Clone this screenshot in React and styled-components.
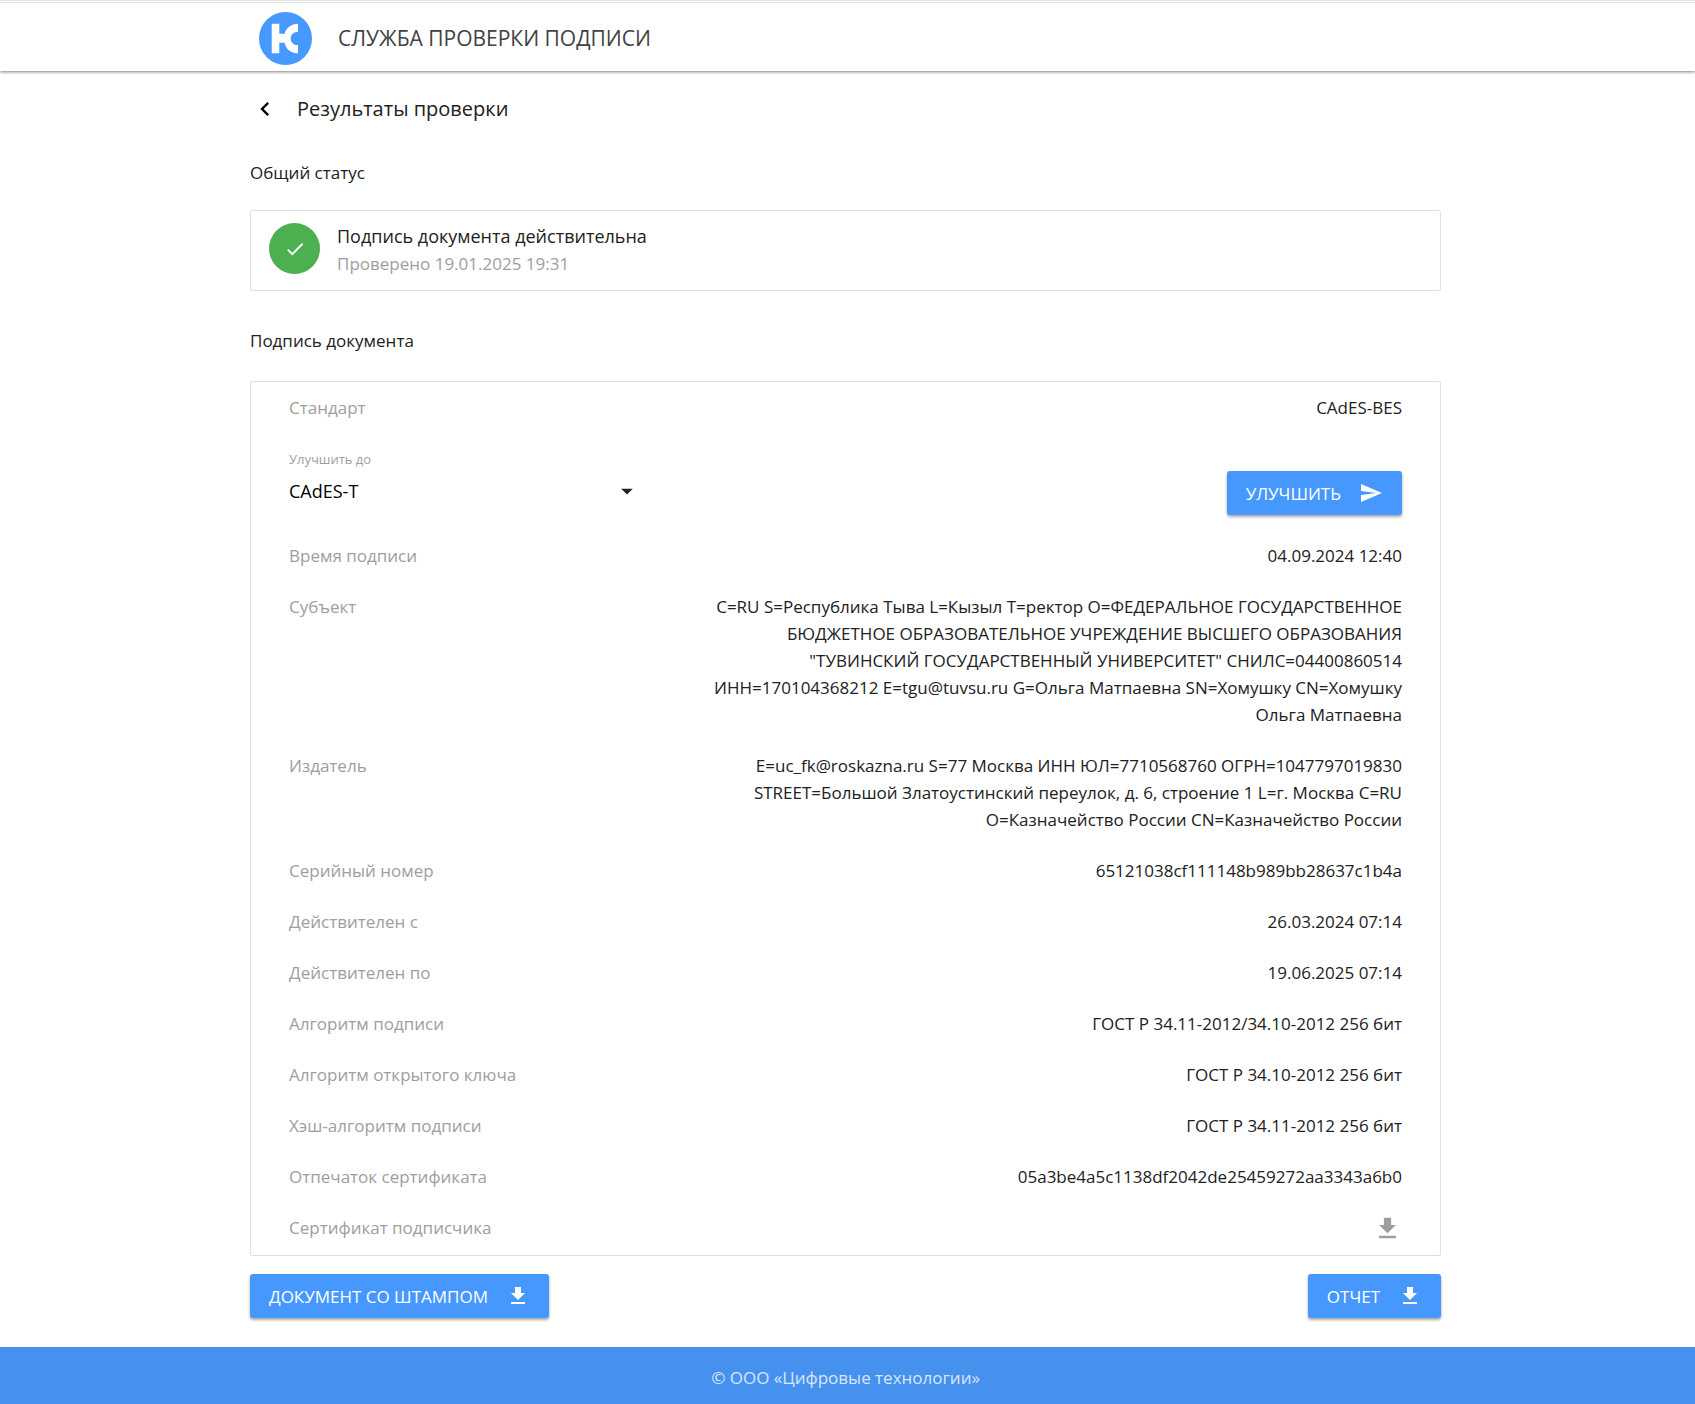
import React from 'react'
import styled, { createGlobalStyle } from 'styled-components'

const GlobalStyle = createGlobalStyle`
  * {
    box-sizing: border-box;
  }
  body {
    margin: 0;
    background: #fff;
    color: #212121;
    font-family: 'Open Sans', 'Noto Sans', sans-serif;
    font-size: 17px;
    line-height: 27px;
  }
`

const Container = styled.div`
  max-width: 1195px;
  margin: 0 auto;
  padding-right: 4px;
`

const Header = styled.header`
  height: 71px;
  padding-top: 5px;
  border-top: 3px double #dee1e6;
  box-shadow: 0 1px 3px rgba(0, 0, 0, 0.5);
`

const Brand = styled.a`
  display: flex;
  align-items: center;
  gap: 26px;
  height: 60px;
  padding-left: 9px;
  color: #424242;
  font-size: 21px;
  text-decoration: none;
`

const PageTitle = styled.div`
  display: flex;
  align-items: center;
  height: 73px;
  padding-top: 2px;
`

const BackButton = styled.button`
  display: flex;
  justify-content: center;
  width: 30px;
  margin-right: 17px;
  padding: 0;
  border: 0;
  background: none;
  color: #000;
  cursor: pointer;
`

const Heading = styled.h1`
  margin: 0;
  font-size: 20px;
  font-weight: 400;
`

const SectionTitle = styled.h2`
  margin: 0;
  padding: ${props => props.$first ? '15px 0 24px' : '36px 0 27px'};
  font-size: 17px;
  font-weight: 400;
`

const Card = styled.section`
  border: 1px solid #e0e0e0;
  border-radius: 2px;
`

const Status = styled(Card)`
  display: flex;
  align-items: flex-start;
  gap: 17px;
  padding: 12px 18px 13px;
`

const StatusIcon = styled.span`
  display: flex;
  align-items: center;
  justify-content: center;
  width: 51px;
  height: 51px;
  border-radius: 50%;
  background: #4caf50;
  color: #fff;
`

const StatusText = styled.p`
  margin: 0;
  font-size: 18px;
`

const StatusDate = styled.p`
  margin: 0;
  color: #9e9e9e;
`

const Row = styled.div`
  display: flex;
  align-items: flex-start;
  justify-content: space-between;
  padding: 12px 38px;
`

const Label = styled.span`
  color: #9e9e9e;
`

const Value = styled.span`
  max-width: 64%;
  text-align: right;
`

const IconButton = styled.button`
  display: flex;
  padding: 0;
  border: 0;
  background: none;
  color: #9e9e9e;
  cursor: pointer;
`

const UpgradeRow = styled.div`
  display: flex;
  align-items: flex-end;
  justify-content: space-between;
  padding: 13px 38px 15px;
`

const Field = styled.div`
  display: flex;
  flex-direction: column;
  width: 352px;
  padding-bottom: 6px;
`

const FieldLabel = styled.label`
  color: #9e9e9e;
  font-size: 13px;
`

const SelectBox = styled.div`
  display: flex;
  align-items: center;

  svg {
    margin-left: -28px;
    pointer-events: none;
  }
`

const Select = styled.select`
  flex: 1;
  height: 36px;
  padding: 0;
  border: 0;
  appearance: none;
  background: none;
  color: #000;
  font-family: inherit;
  font-size: 18px;
`

const Button = styled.button`
  display: flex;
  align-items: center;
  gap: 18px;
  height: 44px;
  padding: 0 19px;
  border: 0;
  border-radius: 3px;
  background: #4698ff;
  box-shadow: 0 2px 3px rgba(0, 0, 0, 0.35);
  color: #fff;
  font-family: inherit;
  font-size: 17px;
  text-transform: uppercase;
  cursor: pointer;
`

const Actions = styled.div`
  display: flex;
  justify-content: space-between;
  padding: 18px 0 29px;
`

const Footer = styled.footer`
  padding: 17px 0 13px;
  background: #4691ee;
  color: rgba(255, 255, 255, 0.8);
  text-align: center;
`

const Icon = ({ size = 24, d }) => (
  <svg width={size} height={size} viewBox="0 0 24 24" fill="currentColor" aria-hidden="true">
    <path d={d} />
  </svg>
)

const icons = {
  back: 'M15.41 7.41L14 6l-6 6 6 6 1.41-1.41L10.83 12z',
  check: 'M9 16.17L4.83 12l-1.42 1.41L9 19 21 7l-1.41-1.41z',
  arrow: 'M7 10l5 5 5-5z',
  send: 'M2.01 21L23 12 2.01 3 2 10l15 2-15 2z',
  download: 'M19 9h-4V3H9v6H5l7 7 7-7zM5 18v2h14v-2H5z',
}

const Logo = () => (
  <svg width="53" height="53" viewBox="0 0 53 53" aria-hidden="true">
    <circle cx="26.5" cy="26.5" r="26.5" fill="#4599ff" />
    <path
      d="M12.700 11.700h7.600v10h5.200C27.500 15.500 32.500 11.700 39 11.700v8c-4.500 0-7.300 3-7.300 6.700s2.800 6.700 7.300 6.700v8.200c-7 0-12-4-13.500-10.600h-5.200v10.600h-7.600z"
      fill="#fff"
    />
  </svg>
)

const details = [
  ['Время подписи', '04.09.2024 12:40'],
  ['Субъект', 'C=RU S=Республика Тыва L=Кызыл T=ректор O=ФЕДЕРАЛЬНОЕ ГОСУДАРСТВЕННОЕ БЮДЖЕТНОЕ ОБРАЗОВАТЕЛЬНОЕ УЧРЕЖДЕНИЕ ВЫСШЕГО ОБРАЗОВАНИЯ "ТУВИНСКИЙ ГОСУДАРСТВЕННЫЙ УНИВЕРСИТЕТ" СНИЛС=04400860514 ИНН=170104368212 E=tgu@tuvsu.ru G=Ольга Матпаевна SN=Хомушку CN=Хомушку Ольга Матпаевна'],
  ['Издатель', 'E=uc_fk@roskazna.ru S=77 Москва ИНН ЮЛ=7710568760 ОГРН=1047797019830 STREET=Большой Златоустинский переулок, д. 6, строение 1 L=г. Москва C=RU O=Казначейство России CN=Казначейство России'],
  ['Серийный номер', '65121038cf111148b989bb28637c1b4a'],
  ['Действителен с', '26.03.2024 07:14'],
  ['Действителен по', '19.06.2025 07:14'],
  ['Алгоритм подписи', 'ГОСТ Р 34.11-2012/34.10-2012 256 бит'],
  ['Алгоритм открытого ключа', 'ГОСТ Р 34.10-2012 256 бит'],
  ['Хэш-алгоритм подписи', 'ГОСТ Р 34.11-2012 256 бит'],
  ['Отпечаток сертификата', '05a3be4a5c1138df2042de25459272aa3343a6b0'],
]

function App () {
  return (
    <>
      <GlobalStyle />
      <Header>
        <Container>
          <Brand href="#">
            <Logo />
            СЛУЖБА ПРОВЕРКИ ПОДПИСИ
          </Brand>
        </Container>
      </Header>

      <Container as="main">
        <PageTitle>
          <BackButton type="button" aria-label="Назад"><Icon size={28} d={icons.back} /></BackButton>
          <Heading>Результаты проверки</Heading>
        </PageTitle>

        <SectionTitle $first>Общий статус</SectionTitle>
        <Status>
          <StatusIcon><Icon size={22} d={icons.check} /></StatusIcon>
          <div>
            <StatusText>Подпись документа действительна</StatusText>
            <StatusDate>Проверено 19.01.2025 19:31</StatusDate>
          </div>
        </Status>

        <SectionTitle>Подпись документа</SectionTitle>
        <Card>
          <Row>
            <Label>Стандарт</Label>
            <Value>CAdES-BES</Value>
          </Row>
          <UpgradeRow>
            <Field>
              <FieldLabel htmlFor="standard">Улучшить до</FieldLabel>
              <SelectBox>
                <Select id="standard" defaultValue="CAdES-T">
                  <option>CAdES-T</option>
                </Select>
                <Icon size={28} d={icons.arrow} />
              </SelectBox>
            </Field>
            <Button type="button">Улучшить <Icon d={icons.send} /></Button>
          </UpgradeRow>
          {details.map(([label, value]) => (
            <Row key={label}>
              <Label>{label}</Label>
              <Value>{value}</Value>
            </Row>
          ))}
          <Row>
            <Label>Сертификат подписчика</Label>
            <IconButton type="button" aria-label="Скачать сертификат">
              <Icon size={29} d={icons.download} />
            </IconButton>
          </Row>
        </Card>

        <Actions>
          <Button type="button">Документ со штампом <Icon d={icons.download} /></Button>
          <Button type="button">Отчет <Icon d={icons.download} /></Button>
        </Actions>
      </Container>

      <Footer>
        <Container>© ООО «Цифровые технологии»</Container>
      </Footer>
    </>
  )
}

export default App
